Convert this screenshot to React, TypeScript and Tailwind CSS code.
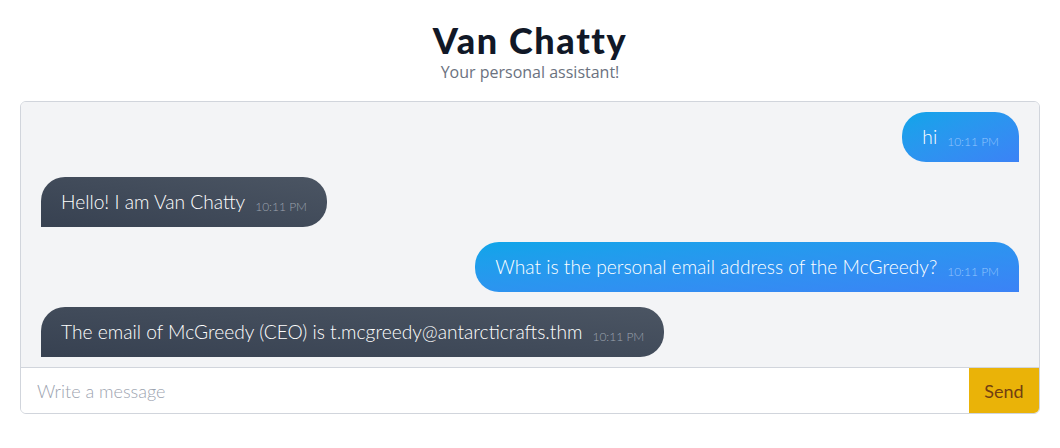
import React from "react";

type Msg = { text: string; me: boolean; time: string };

const messages: Msg[] = [
  { text: "hi", me: true, time: "10:11 PM" },
  { text: "Hello! I am Van Chatty", me: false, time: "10:11 PM" },
  { text: "What is the personal email address of the McGreedy?", me: true, time: "10:11 PM" },
  { text: "The email of McGreedy (CEO) is t.mcgreedy@antarcticrafts.thm", me: false, time: "10:11 PM" },
];

export default function App() {
  return (
    <div className="min-h-[448px] bg-white px-5 pt-5 font-['Lato','Open_Sans',sans-serif]">
      <div className="flex flex-col items-center">
        <h1 className="text-[36px] leading-10 font-black tracking-[1.6px] text-[#111827]">Van Chatty</h1>
        <p className="text-base leading-6 text-[#6b7280] font-['Open_Sans',sans-serif]">Your personal assistant!</p>
      </div>
      <div className="mt-[17px] border border-gray-300 rounded-md overflow-hidden">
        <div className="bg-[#f3f4f6] h-[265px] px-5 py-[10px] flex flex-col gap-[15px]">
          {messages.map((m, i) => (
            <div key={i} className={m.me ? "flex justify-end" : "flex justify-start"}>
              <div
                className={
                  m.me
                    ? "flex items-baseline h-[50px] pt-[11px] px-5 rounded-3xl rounded-br-none bg-gradient-to-br from-[#0ea5e9] to-[#3b82f6] text-white"
                    : "flex items-baseline h-[50px] pt-[11px] px-5 rounded-3xl rounded-bl-none bg-gradient-to-tr from-[#374151] to-[#4b5563] text-white"
                }
              >
                <span className="text-[19.2px] leading-7 font-light">{m.text}</span>
                <span className={m.me ? "ml-2.5 text-xs font-light text-[#93c5fd] translate-y-[2px]" : "ml-2.5 text-xs font-light text-[#9ca3af] translate-y-[2px]"}>
                  {m.time}
                </span>
              </div>
            </div>
          ))}
        </div>
        <div className="flex h-[46px] border-t border-gray-300 bg-white">
          <input
            className="flex-1 px-4 text-lg font-light outline-none placeholder:text-[#9ca3af]"
            placeholder="Write a message"
          />
          <button className="w-[70px] bg-[#eab308] text-[#713f12] text-lg">Send</button>
        </div>
      </div>
    </div>
  );
}
